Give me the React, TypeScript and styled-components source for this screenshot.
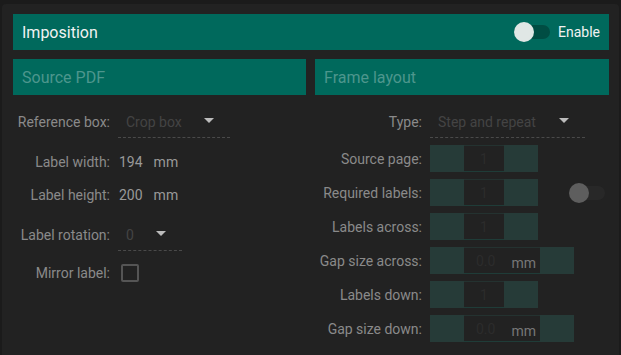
import React from "react";
import styled, { createGlobalStyle } from "styled-components";

const GlobalStyle = createGlobalStyle`
  html, body {
    margin: 0;
    padding: 0;
    background: #1b1b1b;
    font-family: Roboto, "Liberation Sans", sans-serif;
  }
`;

const Panel = styled.div`
  margin: 4px 2px 0 2px;
  min-height: 351px;
  box-sizing: border-box;
  background: #222222;
  border-radius: 4px 4px 0 0;
  padding: 10px 10px 0 11px;
`;

const Header = styled.div`
  height: 36px;
  background: #00695c;
  display: flex;
  align-items: center;
  padding: 0 9px;
  color: #f2f2f2;
  font-size: 16px;
  font-weight: 400;
`;

const Title = styled.div`
  flex: 1;
`;

const Switch = styled.div<{ on?: boolean }>`
  position: relative;
  width: 36px;
  height: 14px;
  border-radius: 7px;
  background: ${(p) => (p.on ? "#004d43" : "#282828")};

  &::after {
    content: "";
    position: absolute;
    left: 0;
    top: -3px;
    width: 20px;
    height: 20px;
    border-radius: 50%;
    background: ${(p) => (p.on ? "#e0e7e5" : "#5e5e5e")};
  }
`;

const SwitchLabel = styled.span`
  margin-left: 8px;
  font-size: 14px;
`;

const Columns = styled.div`
  display: grid;
  grid-template-columns: 293px 1fr;
  column-gap: 9px;
  margin-top: 9px;
`;

const SubHeader = styled.div`
  height: 36px;
  background: #00695c;
  color: #4d968d;
  font-size: 16px;
  display: flex;
  align-items: center;
  padding: 0 9px;
`;

const Form = styled.div`
  display: flex;
  flex-direction: column;
  padding-top: 10px;
`;

const Row = styled.div<{ h?: number; mt?: number }>`
  display: flex;
  align-items: center;
  height: ${(p) => p.h ?? 33}px;
  margin-top: ${(p) => p.mt ?? 0}px;
`;

const Label = styled.div<{ w: number }>`
  width: ${(p) => p.w}px;
  flex: none;
  text-align: right;
  color: #8a8a8a;
  font-size: 14px;
  margin-right: 8px;
`;

const Select = styled.div<{ w: number }>`
  width: ${(p) => p.w}px;
  align-self: stretch;
  box-sizing: border-box;
  border-bottom: 1px dashed #4a4a4a;
  display: flex;
  align-items: center;
  padding: 0 8px;
  color: #444444;
  font-size: 14px;
`;

const SelectText = styled.span`
  flex: 1;
  padding-top: 2px;
`;

const Caret = styled.span`
  width: 0;
  height: 0;
  border-left: 5px solid transparent;
  border-right: 5px solid transparent;
  border-top: 5px solid #bcbcbc;
  margin-right: 8px;
  margin-bottom: 2px;
`;

const Value = styled.span`
  color: #999999;
  font-size: 14px;
  margin-left: 1px;
  & + & {
    margin-left: 11px;
  }
`;

const Check = styled.div`
  width: 14px;
  height: 14px;
  margin-left: 3px;
  border: 2px solid #555555;
  border-radius: 2px;
`;

const Spinner = styled.div`
  display: flex;
  height: 27px;
`;

const SpinButton = styled.div`
  width: 34px;
  background: #263b38;
`;

const SpinInput = styled.div<{ wide?: boolean }>`
  width: ${(p) => (p.wide ? 76 : 40)}px;
  box-sizing: border-box;
  border-top: 1px solid #243230;
  border-bottom: 1px solid #1f3c38;
  display: flex;
  align-items: center;
  justify-content: ${(p) => (p.wide ? "flex-end" : "center")};
  padding-right: ${(p) => (p.wide ? 4 : 0)}px;
  font-size: 14px;
  color: #2c2c2c;
`;

const Unit = styled.span`
  color: #777777;
  margin-left: 16px;
  padding-top: 4px;
`;

const RightSwitch = styled.div`
  margin-left: 31px;
`;

const Spin = ({ value, unit }: { value: string; unit?: string }) => (
  <Spinner>
    <SpinButton />
    <SpinInput wide={!!unit}>
      {value}
      {unit && <Unit>{unit}</Unit>}
    </SpinInput>
    <SpinButton />
  </Spinner>
);

const frameRows = [
  { label: "Source page:", value: "1" },
  { label: "Required labels:", value: "1", toggle: true },
  { label: "Labels across:", value: "1" },
  { label: "Gap size across:", value: "0.0", unit: "mm" },
  { label: "Labels down:", value: "1" },
  { label: "Gap size down:", value: "0.0", unit: "mm" },
];

const App = () => (
  <>
    <GlobalStyle />
    <Panel>
      <Header>
        <Title>Imposition</Title>
        <Switch on />
        <SwitchLabel>Enable</SwitchLabel>
      </Header>
      <Columns>
        <div>
          <SubHeader>Source PDF</SubHeader>
          <Form>
            <Row>
              <Label w={97}>Reference box:</Label>
              <Select w={112}>
                <SelectText>Crop box</SelectText>
                <Caret />
              </Select>
            </Row>
            <Row mt={7}>
              <Label w={97}>Label width:</Label>
              <Value>194</Value>
              <Value>mm</Value>
            </Row>
            <Row>
              <Label w={97}>Label height:</Label>
              <Value>200</Value>
              <Value>mm</Value>
            </Row>
            <Row mt={7}>
              <Label w={97}>Label rotation:</Label>
              <Select w={64}>
                <SelectText>0</SelectText>
                <Caret />
              </Select>
            </Row>
            <Row mt={8} h={28}>
              <Label w={97}>Mirror label:</Label>
              <Check />
            </Row>
          </Form>
        </div>
        <div>
          <SubHeader>Frame layout</SubHeader>
          <Form>
            <Row>
              <Label w={107}>Type:</Label>
              <Select w={155}>
                <SelectText>Step and repeat</SelectText>
                <Caret />
              </Select>
            </Row>
            {frameRows.map((r) => (
              <Row key={r.label} h={27} mt={7}>
                <Label w={107}>{r.label}</Label>
                <Spin value={r.value} unit={r.unit} />
                {r.toggle && (
                  <RightSwitch>
                    <Switch />
                  </RightSwitch>
                )}
              </Row>
            ))}
          </Form>
        </div>
      </Columns>
    </Panel>
  </>
);

export default App;
